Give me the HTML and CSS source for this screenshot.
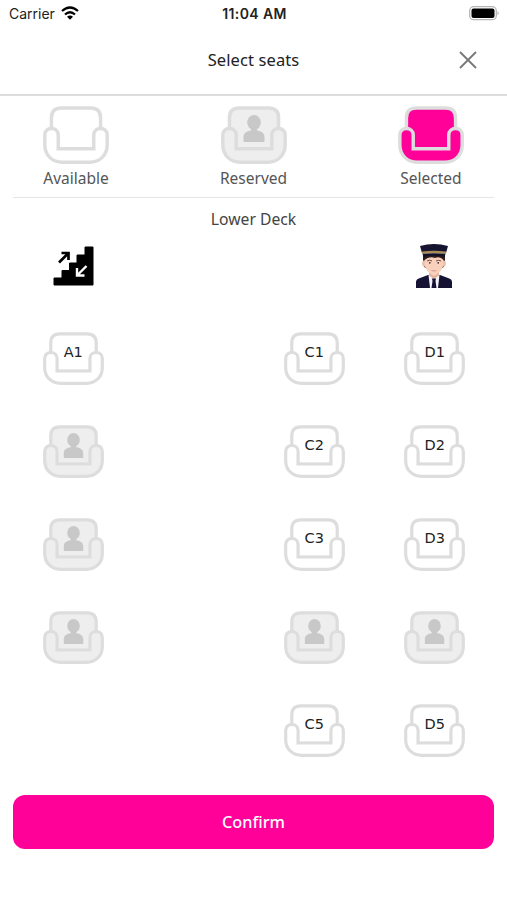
FILE: index.html
```html
<!DOCTYPE html>
<html lang="en">
<head>
    <meta charset="UTF-8">
    <meta name="viewport" content="width=device-width, initial-scale=1.0">
    <title>Select seats</title>
    <link rel="stylesheet" href="styles.css">
</head>
<body>
    <svg class="symbols" width="0" height="0">
        <symbol id="seat" viewBox="0 0 65 58" preserveAspectRatio="none">
            <path d="M8.300 30V12Q8.300 2 18 2H47Q56.700 2 56.700 12V30L50 43H15Z"/>
            <path d="M8.300 22.500C4.500 22.500 1.800 25 1.800 29V39C1.800 49 9 56.200 19 56.200H46C56 56.200 63.200 49 63.200 39V29C63.200 25 60.500 22.500 56.700 22.500S50 25 50 29V42.700H15V29C15 25 12.100 22.500 8.300 22.500Z"/>
        </symbol>
        <symbol id="person" viewBox="0 0 22 27">
            <ellipse cx="11" cy="7.500" rx="6.800" ry="7.500"/>
            <path d="M8 13H14V15.500C18 16 21.500 18 21.500 22V27H.5V22C.5 18 4 16 8 15.500Z"/>
        </symbol>
    </svg>

    <div class="status-bar">
        <div class="carrier">
            <span>Carrier</span>
            <svg class="wifi" viewBox="0 0 18 14">
                <path d="M1 5Q9-2 17 5M4 8.500Q9 4 14 8.500" fill="none" stroke="#000" stroke-width="2.300"/>
                <path d="M6 10.800Q9 8.400 12 10.800L9 13.800Z"/>
            </svg>
        </div>
        <div class="time">11:04 AM</div>
        <svg class="battery" viewBox="0 0 31 15">
            <rect x=".7" y=".7" width="26.600" height="13" rx="4" fill="#fff" stroke="#b5b5b5" stroke-width="1.300"/>
            <rect x="2.500" y="2.500" width="23" height="9.500" rx="2"/>
            <path d="M28.500 5Q31 7.200 28.500 9.400Z" fill="#b5b5b5"/>
        </svg>
    </div>

    <div class="header">
        <div class="title">Select seats</div>
        <svg class="close" viewBox="0 0 18 18"><path d="M1 1L17 17M17 1L1 17"/></svg>
    </div>

    <div class="content">
        <div class="legend">
            <div class="legend-item">
                <div class="seat large"><svg class="chair"><use href="#seat"/></svg></div>
                <div class="label">Available</div>
            </div>
            <div class="legend-item">
                <div class="seat large reserved"><svg class="chair"><use href="#seat"/></svg><svg class="person"><use href="#person"/></svg></div>
                <div class="label">Reserved</div>
            </div>
            <div class="legend-item">
                <div class="seat large selected"><svg class="chair"><use href="#seat"/></svg></div>
                <div class="label">Selected</div>
            </div>
        </div>

        <div class="deck">Lower Deck</div>

        <div class="front">
            <svg class="stairs" viewBox="0 0 41 40">
                <path d="M1 32H9V24.500H16.500V17H24V9H32V1H40V39H1Z" stroke="#000" stroke-linejoin="round"/>
                <path d="M6 16.500L15 7.500M8.500 7H15.500V14" fill="none" stroke="#000" stroke-width="2.700"/>
                <path d="M33.500 20L24.500 29M24 22V29.500H31.500" fill="none" stroke="#fff" stroke-width="2.400"/>
            </svg>
            <svg class="driver" viewBox="0 0 38 46">
                <path d="M1 45V39Q1 36 5 35L13 32H25L33 35Q37 36 37 39V45Z" fill="#151333"/>
                <path d="M14 27H24V34L19 38L14 34Z" fill="#e5b29c"/>
                <path d="M13.500 32L19 36L24.500 32L23 45H15Z" fill="#f4f3f8"/>
                <path d="M17 35.500H21L20.500 38L21.500 45H16.500L17.500 38Z" fill="#151333"/>
                <path d="M8 11H30V20L28 25H10L8 20Z" fill="#2d1c1b"/>
                <ellipse cx="8.800" cy="20.500" rx="1.600" ry="3" fill="#edbba4"/>
                <ellipse cx="29.200" cy="20.500" rx="1.600" ry="3" fill="#edbba4"/>
                <path d="M9.500 17Q14 13 20 15Q25 13 28.500 17V22Q27 29 19 33Q11 29 9.500 22Z" fill="#f8d0bb"/>
                <path d="M12 18Q14.500 16.500 17 18M21 18Q23.500 16.500 26 18" fill="none" stroke="#705048"/>
                <circle cx="14.800" cy="19.800" r=".9" fill="#49302c"/>
                <circle cx="23.200" cy="19.800" r=".9" fill="#49302c"/>
                <path d="M16.500 27.500Q19 28.600 21.500 27.500" fill="none" stroke="#d59a8b"/>
                <path d="M5 3Q19-1 33 3L31 10H7Z" fill="#171431"/>
                <path d="M7 8.500Q19 7 31 8.500V10.800Q19 9.500 7 10.800Z" fill="#a98c55"/>
                <path d="M7.500 10.800Q19 9.500 30.500 10.800L29.500 14Q19 11.500 8.500 14Z" fill="#111026"/>
            </svg>
        </div>

        <div class="seats" id="seats"></div>

        <button class="confirm">Confirm</button>
    </div>

    <script>
        // o = open, x = reserved, . = no seat
        const rows = ['o.oo', 'x.oo', 'x.oo', 'x.xx', '..oo'];
        const seats = document.getElementById('seats');

        rows.forEach((row, i) => {
            [...row].forEach((state, j) => {
                const cell = document.createElement('div');
                if (state !== '.') {
                    cell.className = state === 'x' ? 'seat reserved' : 'seat';
                    cell.innerHTML = '<svg class="chair"><use href="#seat"/></svg>' +
                        (state === 'x'
                            ? '<svg class="person"><use href="#person"/></svg>'
                            : '<span class="number">' + 'ABCD'[j] + (i + 1) + '</span>');
                }
                seats.appendChild(cell);
            });
        });
    </script>
</body>
</html>
```
FILE: styles.css
```css
* {
    box-sizing: border-box;
}

body {
    margin: 0;
    height: 900px;
    background: #fff;
    color: #222;
    font-family: "Noto Sans", sans-serif;
    font-size: 16px;
    overflow: hidden;
}

svg {
    display: block;
}

.symbols {
    position: absolute;
}

.status-bar {
    display: grid;
    grid-template-columns: 1fr auto 1fr;
    align-items: center;
    height: 27px;
    padding: 0 7px 0 9px;
    font-family: Inter, sans-serif;
    font-size: 14px;
}

.carrier {
    display: flex;
    align-items: center;
    gap: 6px;
}

.wifi {
    width: 18px;
    height: 14px;
    margin-top: -1px;
}

.time {
    font-weight: 600;
    letter-spacing: 0.4px;
}

.battery {
    width: 31px;
    height: 15px;
    justify-self: end;
}

.header {
    display: grid;
    grid-template-columns: 1fr auto 1fr;
    align-items: center;
    height: 69px;
    padding: 0 30px 2px;
    border-bottom: 2px solid #ddd;
}

.title {
    grid-column: 2;
    font-size: 16.5px;
    letter-spacing: 0.1px;
}

.close {
    width: 18px;
    height: 18px;
    justify-self: end;
    stroke: #777;
    stroke-width: 1.8;
}

.content {
    padding: 0 13px;
}

.legend {
    display: flex;
    justify-content: space-between;
    height: 102px;
    padding: 10px 30px 0;
    border-bottom: 1px solid #e6e6e6;
}

.legend-item {
    display: flex;
    flex-direction: column;
    align-items: center;
    width: 66px;
}

.label {
    margin-top: 2px;
    line-height: 24px;
    white-space: nowrap;
    font-size: 15.5px;
    color: #555;
}

.seat {
    position: relative;
    width: 61px;
    height: 53px;
}

.seat.large {
    width: 66px;
    height: 58px;
}

.chair {
    width: 100%;
    height: 100%;
    fill: #fff;
    stroke: #ddd;
    stroke-width: 3.4;
}

.reserved .chair {
    fill: #eee;
}

.selected .chair {
    fill: #ff0099;
}

.person {
    position: absolute;
    top: 8px;
    left: 20px;
    width: 21px;
    height: 25px;
    fill: #c8c8c8;
}

.large .person {
    top: 9px;
    left: 22px;
    width: 22px;
    height: 27px;
}

.number {
    position: absolute;
    top: 10px;
    left: 0;
    width: 100%;
    line-height: 20px;
    text-align: center;
    font-family: "DejaVu Sans", sans-serif;
    font-size: 14.5px;
}

.deck {
    height: 45px;
    line-height: 42px;
    text-align: center;
    font-size: 15.7px;
    color: #444;
}

.front {
    display: flex;
    justify-content: space-between;
    height: 69px;
    padding: 0 41px 0 40px;
}

.stairs {
    width: 41px;
    height: 40px;
    margin-top: 3px;
}

.driver {
    width: 38px;
    height: 46px;
}

.seats {
    display: grid;
    grid-template-columns: repeat(4, 1fr);
    grid-auto-rows: 93px;
    place-items: center;
    margin-right: -1px;
}

.confirm {
    display: block;
    width: 100%;
    height: 54px;
    margin-top: 18px;
    border: none;
    border-radius: 12px;
    background: #ff0099;
    color: #fff;
    font-family: "Noto Sans", sans-serif;
    font-size: 16.3px;
    font-weight: 500;
}
```
